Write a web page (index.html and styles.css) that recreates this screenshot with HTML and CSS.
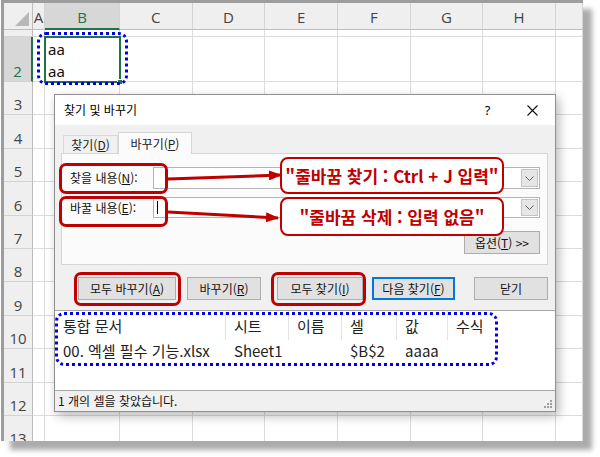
FILE: index.html
```html
<!DOCTYPE html>
<html lang="ko">
<head>
<meta charset="utf-8">
<title>찾기 및 바꾸기</title>
<link rel="stylesheet" href="styles.css">
</head>
<body>
<div class="stage">
  <div class="frame">
    <div class="sheet">
      <div class="hd corner"><span class="tri"></span></div>
      <div class="hd">A</div>
      <div class="hd sel">B</div>
      <div class="hd">C</div>
      <div class="hd">D</div>
      <div class="hd">E</div>
      <div class="hd">F</div>
      <div class="hd">G</div>
      <div class="hd">H</div>
      <div class="hd"></div>

      <div class="rh"></div><div class="c"></div><div class="c"></div><div class="c"></div><div class="c"></div><div class="c"></div><div class="c"></div><div class="c"></div><div class="c"></div><div class="c"></div>

      <div class="rh sel">2</div><div class="c"></div><div class="c val">aa<br>aa</div><div class="c"></div><div class="c"></div><div class="c"></div><div class="c"></div><div class="c"></div><div class="c"></div><div class="c"></div>

      <div class="rh">3</div><div class="c"></div><div class="c"></div><div class="c"></div><div class="c"></div><div class="c"></div><div class="c"></div><div class="c"></div><div class="c"></div><div class="c"></div>
      <div class="rh">4</div><div class="c"></div><div class="c"></div><div class="c"></div><div class="c"></div><div class="c"></div><div class="c"></div><div class="c"></div><div class="c"></div><div class="c"></div>
      <div class="rh">5</div><div class="c"></div><div class="c"></div><div class="c"></div><div class="c"></div><div class="c"></div><div class="c"></div><div class="c"></div><div class="c"></div><div class="c"></div>
      <div class="rh">6</div><div class="c"></div><div class="c"></div><div class="c"></div><div class="c"></div><div class="c"></div><div class="c"></div><div class="c"></div><div class="c"></div><div class="c"></div>
      <div class="rh">7</div><div class="c"></div><div class="c"></div><div class="c"></div><div class="c"></div><div class="c"></div><div class="c"></div><div class="c"></div><div class="c"></div><div class="c"></div>
      <div class="rh">8</div><div class="c"></div><div class="c"></div><div class="c"></div><div class="c"></div><div class="c"></div><div class="c"></div><div class="c"></div><div class="c"></div><div class="c"></div>
      <div class="rh">9</div><div class="c"></div><div class="c"></div><div class="c"></div><div class="c"></div><div class="c"></div><div class="c"></div><div class="c"></div><div class="c"></div><div class="c"></div>
      <div class="rh">10</div><div class="c"></div><div class="c"></div><div class="c"></div><div class="c"></div><div class="c"></div><div class="c"></div><div class="c"></div><div class="c"></div><div class="c"></div>
      <div class="rh">11</div><div class="c"></div><div class="c"></div><div class="c"></div><div class="c"></div><div class="c"></div><div class="c"></div><div class="c"></div><div class="c"></div><div class="c"></div>
      <div class="rh">12</div><div class="c"></div><div class="c"></div><div class="c"></div><div class="c"></div><div class="c"></div><div class="c"></div><div class="c"></div><div class="c"></div><div class="c"></div>
      <div class="rh">13</div><div class="c"></div><div class="c"></div><div class="c"></div><div class="c"></div><div class="c"></div><div class="c"></div><div class="c"></div><div class="c"></div><div class="c"></div>
    </div>
  </div>

  <div class="selection"><span class="handle"></span></div>
  <div class="dots dots-cells"></div>

  <div class="dialog">
    <div class="titlebar">
      <span class="title">찾기 및 바꾸기</span>
      <span class="tbtn">?</span>
      <span class="tbtn">
        <svg width="11" height="11" viewBox="0 0 11 11"><path d="M0.5 0.5 L10.5 10.5 M10.5 0.5 L0.5 10.5" stroke="#111" stroke-width="1.1" fill="none"/></svg>
      </span>
    </div>
    <div class="body">
      <div class="tabs">
        <div class="tab">찾기(<u>D</u>)</div>
        <div class="tab active">바꾸기(<u>P</u>)</div>
      </div>
      <div class="panel">
        <div class="field">
          <span class="label">찾을 내용(<u>N</u>):</span>
          <div class="combo"><span class="drop"><svg width="9" height="5" viewBox="0 0 9 5"><path d="M0.5 0.5 L4.5 4.5 L8.5 0.5" stroke="#606060" fill="none"/></svg></span></div>
        </div>
        <div class="field second">
          <span class="label">바꿀 내용(<u>E</u>):</span>
          <div class="combo"><span class="caret"></span><span class="drop"><svg width="9" height="5" viewBox="0 0 9 5"><path d="M0.5 0.5 L4.5 4.5 L8.5 0.5" stroke="#606060" fill="none"/></svg></span></div>
        </div>
        <div class="optrow">
          <button class="btn opt">옵션(<u>T</u>) &gt;&gt;</button>
        </div>
      </div>
      <div class="actions">
        <button class="btn b-repall">모두 바꾸기(<u>A</u>)</button>
        <button class="btn b-rep">바꾸기(<u>R</u>)</button>
        <button class="btn b-findall">모두 찾기(<u>I</u>)</button>
        <button class="btn b-next">다음 찾기(<u>F</u>)</button>
        <button class="btn b-close">닫기</button>
      </div>
    </div>
    <div class="results">
      <div class="lrow lhead">
        <span>통합 문서</span><span>시트</span><span>이름</span><span>셀</span><span>값</span><span>수식</span>
      </div>
      <div class="lrow">
        <span>00. 엑셀 필수 기능.xlsx</span><span>Sheet1</span><span></span><span>$B$2</span><span>aaaa</span><span></span>
      </div>
    </div>
    <div class="status">
      <span class="stext">1 개의 셀을 찾았습니다.</span>
      <svg class="grip" width="8" height="8" viewBox="0 0 8 8" fill="#a0a0a0"><rect x="6" y="0" width="2" height="2"/><rect x="3" y="3" width="2" height="2"/><rect x="6" y="3" width="2" height="2"/><rect x="0" y="6" width="2" height="2"/><rect x="3" y="6" width="2" height="2"/><rect x="6" y="6" width="2" height="2"/></svg>
    </div>
  </div>

  <div class="hl hl-find"></div>
  <div class="hl hl-repl"></div>
  <div class="hl hl-repall"></div>
  <div class="hl hl-findall"></div>

  <svg class="arrows" width="140" height="70" viewBox="0 0 140 70">
    <defs>
      <marker id="ah" markerUnits="userSpaceOnUse" markerWidth="13" markerHeight="10" refX="12" refY="5" orient="auto">
        <path d="M0 0 L13 5 L0 10 Z" fill="#c00000"/>
      </marker>
    </defs>
    <line x1="8" y1="14" x2="121" y2="10" stroke="#c00000" stroke-width="3" marker-end="url(#ah)"/>
    <line x1="8" y1="47" x2="118" y2="53" stroke="#c00000" stroke-width="3" marker-end="url(#ah)"/>
  </svg>

  <div class="callout c1">"줄바꿈 찾기 : Ctrl + J 입력"</div>
  <div class="callout c2">"줄바꿈 삭제 : 입력 없음"</div>

  <div class="dots dots-list"></div>
</div>
</body>
</html>
```

FILE: styles.css
```css
* { box-sizing: border-box; }
html, body { margin: 0; padding: 0; background: #fff; }
body {
  width: 600px; height: 457px; overflow: hidden;
  font-family: "Noto Sans CJK KR", "Noto Sans", sans-serif;
}
.stage { position: relative; width: 600px; height: 457px; }

/* worksheet frame */
.frame {
  margin-left: 1px;
  width: 582px; height: 441px;
  border-left: 3px solid #9d9d9d;
  border-top: 3px solid #9d9d9d;
  background: #fff;
  overflow: hidden;
  box-shadow: 9px 9px 5px rgba(0,0,0,0.33);
}
.sheet {
  display: grid;
  grid-template-columns: 29px 12px 75px repeat(6, 72.67px) 1fr;
  grid-template-rows: 27px 7px 45px repeat(11, 33.4px);
}
.hd {
  background: #efefef;
  border-right: 1px solid #d3d3d3;
  border-bottom: 1px solid #bdbdbd;
  color: #444;
  font: 15px/1 "Open Sans", sans-serif;
  display: flex; align-items: center; justify-content: center;
  padding-top: 3px;
}
.hd.sel {
  background: #d7d7d7;
  color: #217346;
  border-bottom: 2px solid #217346;
}
.corner { position: relative; border-right-color: #bdbdbd; }
.tri {
  position: absolute; right: 3px; bottom: 3px;
  width: 0; height: 0;
  border-left: 14px solid transparent;
  border-bottom: 14px solid #b8b8b8;
}
.rh {
  background: #efefef;
  border-right: 1px solid #bdbdbd;
  border-bottom: 1px solid #d3d3d3;
  color: #444;
  font: 15px/16px "Open Sans", sans-serif;
  display: flex; align-items: flex-end; justify-content: center;
  padding-bottom: 2px;
  overflow: hidden;
}
.rh.sel {
  background: #d7d7d7;
  color: #217346;
  border-right: 2px solid #217346;
}
.c {
  border-right: 1px solid #dcdcdc;
  border-bottom: 1px solid #dcdcdc;
}
.val {
  font: 15px/22px "Noto Sans", sans-serif;
  color: #111;
  padding: 1px 0 0 3px;
  white-space: nowrap;
}

/* overlays on the sheet */
.selection {
  position: absolute; left: 44px; top: 36px;
  width: 77px; height: 47px;
  border: 2px solid #217346;
}
.handle {
  position: absolute; right: -4px; bottom: -4px;
  width: 6px; height: 6px;
  background: #217346;
  border: 1px solid #fff;
}
.dots {
  position: absolute;
  border: 3px dotted #0000ee;
  border-radius: 9px;
}
.dots-cells { left: 37px; top: 32px; width: 91px; height: 53px; }
.dots-list { left: 55px; top: 312px; width: 443px; height: 54px; }

/* dialog */
.dialog {
  position: absolute; left: 54px; top: 94px;
  width: 502px; height: 318px;
  border: 1px solid #8f8f8f;
  background: #f0f0f0;
  box-shadow: 3px 4px 10px rgba(0,0,0,0.28);
  display: flex; flex-direction: column;
  font-size: 12px; color: #000;
}
.titlebar {
  height: 30px; flex: none;
  background: #fff;
  display: flex; align-items: center;
  padding-left: 9px;
  line-height: 16px;
}
.title { flex: 1; }
.tbtn {
  width: 45px; height: 30px;
  display: flex; align-items: center; justify-content: center;
  font: 13px "Noto Sans", sans-serif;
}
.body {
  height: 185px; flex: none;
  padding-top: 7px;
}
.tabs {
  display: flex; align-items: flex-end;
  height: 21px;
  margin-left: 8px;
  position: relative; z-index: 1;
}
.tab {
  height: 18px; width: 55px;
  display: flex; align-items: center; justify-content: center;
  line-height: 14px;
  border: 1px solid #dadada; border-bottom: none;
  color: #222;
}
.tab.active {
  height: 22px; width: 74px;
  margin-bottom: -1px;
  background: #fbfbfb;
  border-color: #d6d6d6;
}
.panel {
  margin-left: 6px;
  width: 487px; height: 112px;
  background: #fbfbfb;
  border: 1px solid #d6d6d6;
  padding: 13px 7px 0 8px;
}
.field { display: flex; align-items: center; height: 22px; }
.field.second { margin-top: 8px; height: 21px; }
.label { width: 83px; line-height: 14px; color: #111; }
.combo {
  flex: 1; height: 100%;
  background: #fff;
  border: 1px solid #b4b4b4;
  display: flex; justify-content: flex-end; align-items: stretch;
  position: relative;
  padding: 1px;
}
.drop {
  width: 17px;
  background: #e6e6e6;
  border: 1px solid #c4c4c4;
  display: flex; align-items: center; justify-content: center;
}
.caret {
  position: absolute; left: 3px; top: 3px;
  width: 1px; height: 13px; background: #000;
}
.optrow { display: flex; justify-content: flex-end; margin-top: 13px; }
.btn {
  height: 23px;
  background: #e1e1e1;
  border: 1px solid #adadad;
  font: 12px/14px "Noto Sans CJK KR", "Noto Sans", sans-serif;
  color: #111;
  padding: 0;
  display: flex; align-items: center; justify-content: center;
}
.opt { width: 76px; }
.actions {
  display: flex;
  margin-top: 12px;
  padding-left: 23px;
}
.b-repall { width: 98px; }
.b-rep { width: 74px; margin-left: 11px; }
.b-findall { width: 86px; margin-left: 16px; }
.b-next {
  width: 83px; margin-left: 9px;
  border-color: #0078d7;
  box-shadow: inset 0 0 0 1px #0078d7;
}
.b-close { width: 74px; margin-left: 19px; }

.results {
  height: 81px; flex: none;
  background: #fff;
  border-top: 1px solid #a7a7a7;
  border-bottom: 1px solid #a7a7a7;
  font-size: 15px;
  color: #222;
}
.lrow {
  display: grid;
  grid-template-columns: 171px 63px 53px 55px 51px 1fr;
  height: 22px; align-items: center;
  line-height: 18px;
  white-space: nowrap;
}
.lrow span { padding-left: 8px; height: 100%; display: flex; align-items: center; }
.lhead { height: 29px; }
.lhead span { border-right: 1px solid #e3e3e3; }
.lhead span:last-child { border-right: none; }

.status {
  flex: 1;
  display: flex; align-items: center; justify-content: space-between;
  padding: 0 3px 0 3px;
  line-height: 14px;
  color: #111;
}
.grip { align-self: flex-end; margin-bottom: 3px; }

/* red annotation highlights */
.hl {
  position: absolute;
  border: 3px solid #c00000;
  border-radius: 7px;
}
.hl-find { left: 59px; top: 163px; width: 109px; height: 31px; }
.hl-repl { left: 59px; top: 196px; width: 109px; height: 31px; }
.hl-repall { left: 74px; top: 272px; width: 107px; height: 34px; }
.hl-findall { left: 271px; top: 272px; width: 95px; height: 34px; }

.arrows { position: absolute; left: 160px; top: 165px; }

.callout {
  position: absolute; left: 280px; width: 224px;
  background: #fff;
  border: 2px solid #c00000;
  border-radius: 8px;
  color: #c00000;
  font-weight: bold;
  font-size: 17px;
  line-height: 20px;
  display: flex; align-items: center; justify-content: center;
  white-space: nowrap;
}
.c1 { top: 157px; height: 37px; }
.c2 { top: 197px; height: 39px; }
```
